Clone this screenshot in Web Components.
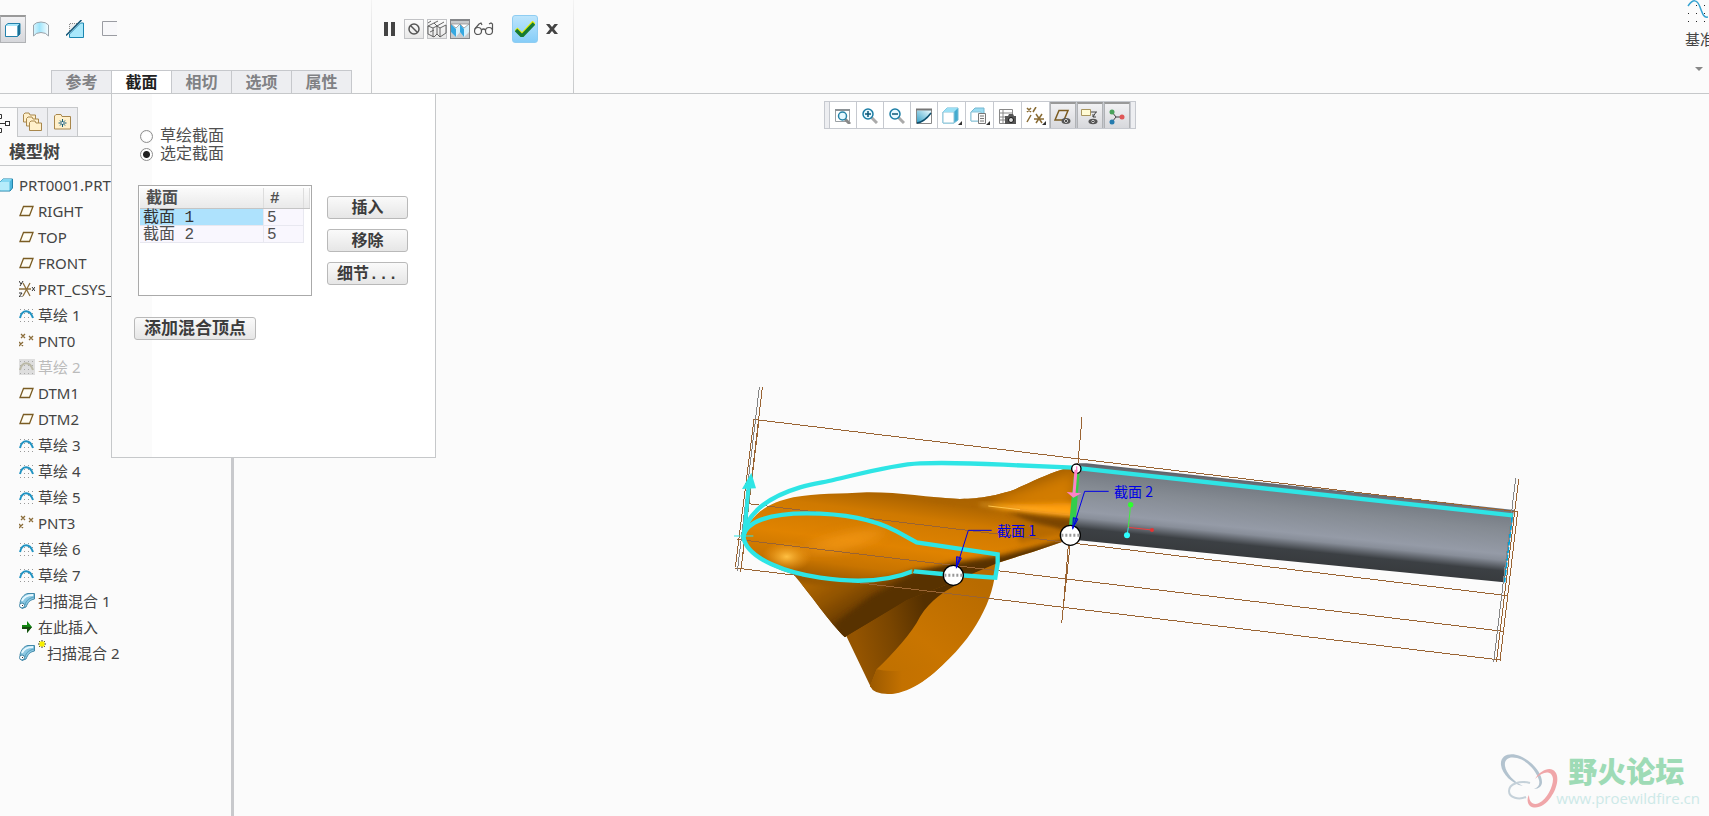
<!DOCTYPE html>
<html lang="zh-CN">
<head>
<meta charset="utf-8">
<title>PRT0001</title>
<style>
  body {
    margin: 0;
    background: #fbfbfb;
    color: #444;
    font-family: "Noto Sans", "Noto Sans CJK SC", sans-serif;
    font-size: 15px;
  }
</style>
</head>
<body>
<cad-app></cad-app>

<template id="model-template">
  <style>
    :host { display: block; min-width: 0; min-height: 0; overflow: hidden; }
    svg { display: block; width: 100%; height: 100%; }
    text { font: 14px "Noto Sans CJK SC", sans-serif; fill: #0000e6; }
  </style>
  <svg viewBox="234 94 1475 722" role="img" aria-label="PRT0001">
    <defs>
      <linearGradient id="shaft" gradientUnits="userSpaceOnUse" x1="1600" y1="334" x2="1577" y2="562">
        <stop offset="0" stop-color="#5e646c"/>
        <stop offset=".08" stop-color="#757b83"/>
        <stop offset=".3" stop-color="#858b93"/>
        <stop offset=".62" stop-color="#959ba7"/>
        <stop offset=".7" stop-color="#888e99"/>
        <stop offset=".84" stop-color="#3c4044"/>
        <stop offset="1" stop-color="#383b3e"/>
      </linearGradient>
      <linearGradient id="body" gradientUnits="userSpaceOnUse" x1="420" y1="365" x2="380" y2="660">
        <stop offset="0" stop-color="#ae6500"/>
        <stop offset=".18" stop-color="#cf7900"/>
        <stop offset=".5" stop-color="#e08300"/>
        <stop offset=".75" stop-color="#c87400"/>
        <stop offset="1" stop-color="#8a4f00"/>
      </linearGradient>
      <linearGradient id="cone" gradientUnits="userSpaceOnUse" x1="300" y1="600" x2="400" y2="770">
        <stop offset="0" stop-color="#b46900"/>
        <stop offset=".5" stop-color="#8d5100"/>
        <stop offset="1" stop-color="#573000"/>
      </linearGradient>
      <linearGradient id="fold" gradientUnits="userSpaceOnUse" x1="400" y1="780" x2="620" y2="730">
        <stop offset="0" stop-color="#945400"/>
        <stop offset=".5" stop-color="#794500"/>
        <stop offset="1" stop-color="#553000"/>
      </linearGradient>
      <linearGradient id="blade" gradientUnits="userSpaceOnUse" x1="540" y1="960" x2="790" y2="650">
        <stop offset="0" stop-color="#bf7000"/>
        <stop offset=".4" stop-color="#c97500"/>
        <stop offset="1" stop-color="#b86b00"/>
      </linearGradient>
      <linearGradient id="tip" x1="0" y1="0" x2="1" y2="0">
        <stop offset="0" stop-color="#9b5900"/>
        <stop offset=".4" stop-color="#c37100"/>
        <stop offset="1" stop-color="#c97500"/>
      </linearGradient>
      <radialGradient id="shine">
        <stop offset="0" stop-color="#ffc043"/>
        <stop offset="1" stop-color="#f49a18" stop-opacity="0"/>
      </radialGradient>
      <clipPath id="hull">
        <path d="M75 500 C80 445 130 402 220 382 C290 370 360 372 440 367 C540 366 620 383 720 387 C790 386 820 377 870 364 C930 340 970 316 1030 298 L1076 296 L1050 508 L940 545 L835 578 L690 640 L560 690 L384 795 L375 802 C330 760 270 670 220 613 C150 590 80 560 75 500Z"/>
      </clipPath>
      <filter id="soft8" x="-30%" y="-30%" width="160%" height="160%"><feGaussianBlur stdDeviation="8"/></filter>
      <filter id="soft20" x="-40%" y="-40%" width="180%" height="180%"><feGaussianBlur stdDeviation="18"/></filter>
    </defs>

    <g transform="translate(720 370) scale(.33333)" fill="none">
      <!-- shaft -->
      <path fill="url(#shaft)" d="M1076 280 L1100 280 L2382 420 L2352 637 L1046 508Z"/>
      <path stroke="#00a0d8" stroke-width="6" stroke-dasharray="18 5" d="M2376 440 L2353 637"/>

      <!-- blade -->
      <path fill="url(#fold)" d="M380 800 L384 785 L540 680 L640 610 L760 600 L700 700 L560 860 L500 930 L452 950Z"/>
      <path fill="url(#blade)" d="M470 898 C520 850 575 790 600 740 C630 690 680 660 700 650 L740 610 L829 578 C825 640 810 690 780 745 C750 800 710 850 640 910 C590 950 550 968 505 972 L450 950Z"/>
      <path fill="url(#tip)" d="M470 898 Q500 906 540 902 Q640 890 690 860 C630 930 560 972 505 972 Q460 972 450 948Z"/>

      <!-- hull -->
      <g clip-path="url(#hull)">
        <path fill="url(#body)" d="M40 260H1100V830H40Z"/>
        <path fill="url(#cone)" filter="url(#soft8)" d="M170 625 C300 650 460 650 580 600 L700 590 L700 700 L380 830 L330 800Z"/>
        <path fill="#593200" filter="url(#soft8)" d="M340 765 L450 680 L580 612 L700 578 L850 555 L1070 500 L1000 560 L700 700 L380 815Z"/>
        <path fill="#a96200" filter="url(#soft8)" d="M620 388 C730 400 780 396 880 374 L1060 300 L1060 275 L860 345 L700 370Z"/>
        <path fill="#d27b00" filter="url(#soft20)" d="M840 385 L1060 310 L1055 430 L820 410Z"/>
        <path fill="#ff9e10" filter="url(#soft8)" d="M800 405 Q930 402 1062 400 V440 L900 426Z"/>
        <path fill="#7a4500" filter="url(#soft8)" d="M860 425 Q960 440 1065 448 V485 L950 470Z"/>
        <path fill="#b86a00" filter="url(#soft8)" d="M870 440 L1000 475 L1030 490 L900 520Z"/>
        <path stroke="#ffc34a" stroke-width="4" filter="url(#soft8)" d="M780 403 L1060 434"/>
        <path stroke="#ffc34a" stroke-width="3" d="M805 408 L900 419"/>
        <path stroke="#f09a20" stroke-width="3" d="M900 419 L1056 435"/>
        <path fill="#f79c1c" filter="url(#soft20)" opacity=".7" d="M230 545 Q360 480 500 478 Q480 510 350 545Z"/>
        <ellipse cx="200" cy="560" rx="75" ry="46" fill="url(#shine)"/>
      </g>

      <!-- datum planes -->
      <g stroke="#9a6433" stroke-width="3" shape-rendering="crispEdges">
        <path d="M100 148 L117 150 L1070 266 L2393 425"/>
        <path d="M75 400 L1080 522 L2362 677"/>
        <path d="M50 508 L1040 627 L2350 784"/>
        <path d="M46 594 L1030 712 L2340 870"/>
        <path d="M127 52 L62 606 M102 148 L46 592 M117 150 L68 560"/>
        <path d="M1086 142 L1073 290 M1052 510 L1025 758 M1045 525 L1030 712"/>
        <path d="M2396 328 L2329 877 M2393 425 L2340 872"/>
        <path stroke="#858585" d="M118 52 L52 604 M2387 325 L2321 877"/>
      </g>

      <!-- trajectory and sections -->
      <g stroke="#2ee5e5" stroke-width="13">
        <path d="M70 500 C76 440 130 385 240 352 C280 341 310 337 340 330 C410 314 520 283 600 280 Q700 277 850 284 L1060 293 L2378 436"/>
        <path d="M70 500 C76 455 150 430 260 430 C380 430 470 452 530 484 L590 517 L833 553 L833 580 L826 623 L668 612 L582 604"/>
        <path d="M70 500 C80 570 210 610 300 623 C400 638 500 636 580 603"/>
        <path d="M86 350 L72 500" stroke-width="12"/>
        <path d="M42 498 H100" stroke-width="3"/>
      </g>
      <path fill="#2ee5e5" d="M94 308 L108 355 L66 357Z"/>
      <path stroke="#b86b00" stroke-width="3" d="M577 597 V612"/>

      <!-- start profile -->
      <path fill="#32cd4b" d="M1062 310 L1079 305 L1066 468 L1047 468Z"/>
      <circle cx="1069" cy="296" r="14" fill="#fff" stroke="#000" stroke-width="4"/>
      <path stroke="#ff82c8" stroke-width="9" d="M1068 300 L1062 372"/>
      <path stroke="#ff82c8" stroke-width="4" d="M1070 289 V304"/>
      <path fill="#ff82c8" d="M1040 366 L1084 370 L1060 383Z"/>

      <!-- drag handles -->
      <g stroke="#000" stroke-width="4" fill="#fff">
        <circle cx="1051" cy="496" r="30"/>
        <circle cx="700" cy="616" r="30"/>
      </g>
      <path stroke="#999" stroke-width="9" stroke-dasharray="6 6" d="M1024 496 H1078 M673 616 H727"/>

      <!-- leaders -->
      <g stroke="#0000e6" stroke-width="3">
        <path d="M709 595 L745 481 H815"/>
        <path d="M1058 478 L1094 364 H1166"/>
        <path fill="#0000e6" fill-opacity=".5" d="M709 592 L710 560 L724 564Z M1058 475 L1060 443 L1074 447Z"/>
      </g>

      <!-- coordinate system -->
      <g stroke-width="3">
        <path stroke="#3cf03c" d="M1232 404 L1225 472"/>
        <path stroke="#f03c3c" d="M1225 472 L1296 480"/>
        <path stroke="#2ee5e5" d="M1225 472 L1221 496"/>
      </g>
      <circle cx="1232" cy="404" r="8" fill="#2dff2d"/>
      <circle cx="1296" cy="480" r="6" fill="#e63232"/>
      <circle cx="1221" cy="496" r="9" fill="#2effff"/>
    </g>
    <text x="997" y="536">截面 1</text>
    <text x="1114" y="497">截面 2</text>
  </svg>
</template>

<script>
const icons = {
  solid: [16, 16, `<path d="M.5 3.500 3 1.500H15V12L12.500 14.500H.5Z" fill="#a9e8fb" stroke="#2481ab"/><path d="M12.500 4 15 1.500V12L12.500 14.500Z" fill="#1b6f95"/><path d="M1 4H12V14H1Z" fill="#fff"/>`],
  surface: [16, 16, `<defs><linearGradient id="g"><stop stop-color="#d9f4fd"/><stop offset=".4" stop-color="#9fe5fb"/><stop offset="1" stop-color="#f8fdff"/></linearGradient></defs><path d="M.5 4Q3 1 8 1T15.500 4V15Q13 11.500 8 11.500T.5 15Z" fill="url(#g)" stroke="#9aa3aa"/>`],
  cut: [18, 18, `<path d="M3.500 11V3.500H11" fill="#eee" stroke="#888" stroke-dasharray="1 1"/><path d="M17.500 3V17.500H3.500V14L14.500 3Z" fill="#a9e8fb" stroke="#1b86b0"/><path d="M0 15.500 15.500 0" stroke="#0d4f70" stroke-width="1.500"/>`],
  thin: [16, 16, `<path d="M15 .5H.5V14.500H15" fill="#f8f8fa" stroke="#9a9ca2"/>`],
  pause: [12, 14, `<path d="M0 0H4V14H0ZM7 0H11V14H7Z" fill="#444"/>`],
  none: [12, 12, `<circle cx="6" cy="6" r="5" fill="none" stroke="#555" stroke-width="1.500"/><path d="M2.500 2.500 9.500 9.500" stroke="#555" stroke-width="1.500"/>`],
  wire: [20, 18, `<path d="M1 6 7 3 10 6V14L7 17 1 14ZM1 6 6 8V17M6 8 10 6M10 6 17 2M7 3 11 1M19 5V13L13 17 10 14M13 8V17M13 8 19 5M10 6 13 8M1 3 4 1M3 12 7 10" fill="none" stroke="#555" stroke-width=".9"/>`],
  preview: [20, 18, `<path d="M1 3H19V11L14 16 10 11 6 16 1 11Z" fill="#d6f1fc"/><path d="M1 3 6 8V16L1 11ZM10 3 14 8V16L10 11Z" fill="#36a8e0"/><path d="M1 3H10L6 7ZM10 3H19L14 7Z" fill="#fff" stroke="#888" stroke-width=".7"/>`],
  glasses: [20, 14, `<g fill="none" stroke="#555" stroke-width="1.200"><circle cx="4" cy="9" r="3.500"/><circle cx="15" cy="9" r="3.500"/><path d="M7.500 8Q9.500 6 11.500 8M.8 7 5 2 7 1 8 3M18.500 8 18.500 2 17 1 15 2"/></g>`],
  ok: [20, 16, `<path d="M1 8 7 14 19 1" fill="none" stroke="#e8f000" stroke-width="4"/><path d="M1 9 7 15 19 2.500" fill="none" stroke="#167a34" stroke-width="3.500"/>`],
  cancel: [12, 10, `<path d="M0 0H3.500L6 3 8.500 0H12L8 5 12 10H8.500L6 7 3.500 10H0L4 5Z" fill="#444"/>`],
  datum: [21, 24, `<path d="M1 6C6-1 10-1 13 7S17 18 21 17" fill="none" stroke="#35a3d2" stroke-width="1.500"/><path d="M1 13.500h1m7 0h1m7 0h1M1 21.500h1m7 0h1m7 0h1M9 5.500h1m7 0h1" stroke="#222"/>`],
  tree: [10, 20, `<g fill="#fff" stroke="#333"><path d="M0 10.500H5"/><rect x="5.500" y="8.500" width="4" height="4"/><path d="M0 1.500H1.500V5.500H0M0 15.500H1.500V19.500H0"/></g>`],
  folders: [20, 20, `<g fill="#fff0cb" stroke="#a8874c"><path d="M.5 10V2.500L2 1H6L7 3H12.500V10Z"/><path d="M3.500 14V6.500L5 5H9L10 7H15.500V14Z"/><path d="M6.500 18.500V10.500L8 9H12L13 11H18.500V18.500Z"/></g>`],
  favorites: [18, 16, `<path d="M.5 15V2L2 .5H7L8 2.500H16.500V15Z" fill="#fff0cb" stroke="#a8874c"/><path d="M8.500 5V13M4.500 9H12.500M6 6.500 11 11.500M11 6.500 6 11.500" stroke="#125b78"/><circle cx="8.500" cy="9" r="1" fill="#fff"/>`],
  part: [16, 16, `<path d="M0 5 3 2H12.500V11L10 14H0Z" fill="#4db7de" stroke="#2384ab"/><path d="M0 5H9.500V13.500H0Z" fill="#b5ecfb"/><path d="M0 5 3 2H12L9.500 5Z" fill="#85d8f2"/>`],
  plane: [16, 16, `<path d="M4.500 3.500H14L10.500 12.500H1Z" fill="#fffdf4" stroke="#7a5c23" stroke-width="1.300"/>`],
  csys: [16, 16, `<path d="M0 8H12M4 2 11 15M11 2 4 15" stroke="#8c6f3c" stroke-width="1.300"/><path d="M0 0 2 3M4 0 1 5M0 12H3L0 16H4M13 6 16 10M16 6 13 10" fill="none" stroke="#333"/>`],
  sketch: [16, 16, `<path d="M1 2.500H15M1 6.500H15M1 10.500H15M1 14.500H15" stroke="#999" stroke-dasharray="1 3"/><path d="M1 11C3 2 11 2 14 11" fill="none" stroke="#2093c2" stroke-width="2"/>`],
  suppressed: [16, 16, `<path d="M0 0H16V16H0Z" fill="#dedede"/><path d="M1 2.500H15M1 6.500H15M1 10.500H15M1 14.500H15" stroke="#aaa" stroke-dasharray="1 3"/><path d="M1 11C3 2 11 2 14 11" fill="none" stroke="#bbb9a6" stroke-width="2"/>`],
  point: [16, 16, `<path d="M2 1 6 5M6 1 2 5M10 3 14 7M14 3 10 7M0 9 4 13M4 9 0 13" stroke="#8a6c39" stroke-width="1.300"/>`],
  blend: [16, 16, `<path d="M1 10C2 5 5 1 9 .5H15.500V6C11 7 9 9 7 14L3 15.500Z" fill="#8cc8e2" stroke="#4188a8"/><path d="M3 8C5 3 9 2 14 2" fill="none" stroke="#e6f8ff" stroke-width="2"/><path d="M6 12C7 7 11 5 15 4" fill="none" stroke="#4f9dbd"/><circle cx="3" cy="12.500" r="2.500" fill="#fff" stroke="#3c83a4"/><path d="M3 12H4V13H3Z" fill="#333"/>`],
  insert: [16, 16, `<path d="M3 6H8V2L13 8 8 14V10H3Z" fill="#138713"/><path d="M3 10H8V14L13 8H3Z" fill="#174e10"/>`],
  fresh: [8, 16, `<path d="M4 0V8M0 4H8M1 1 7 7M7 1 1 7" stroke="#333"/><path d="M1.500 1.500H6.500V6.500H1.500Z" fill="#f8f000"/>`],
  refit: [16, 16, `<path d="M.5 13.500V1.500H14.500V13.500Z" fill="#fff" stroke="#9aa0a4"/><path d="M0 2H15" stroke="#8c9296" stroke-width="2"/><path d="M10 11 15 16" stroke="#888" stroke-width="3"/><circle cx="7.500" cy="8" r="4" fill="#e5f8ff" stroke="#2583a8" stroke-width="1.500"/>`],
  zoomin: [16, 16, `<path d="M9 9 15 15" stroke="#aaa" stroke-width="3"/><circle cx="6" cy="6" r="5" fill="#e9f9ff" stroke="#1b7da5" stroke-width="1.500"/><path d="M3 6H9M6 3V9" stroke="#0c5777" stroke-width="1.500"/>`],
  zoomout: [16, 16, `<path d="M9 9 15 15" stroke="#aaa" stroke-width="3"/><circle cx="6" cy="6" r="5" fill="#e9f9ff" stroke="#1b7da5" stroke-width="1.500"/><path d="M3 6H9" stroke="#0c5777" stroke-width="1.500"/>`],
  repaint: [16, 16, `<defs><linearGradient id="g" x1="1" y1="0" x2="0" y2="1"><stop stop-color="#eafaff"/><stop offset="1" stop-color="#35a0c6"/></linearGradient></defs><path d="M.5 1.500H15.500V15.500H.5Z" fill="#d4f3fd" stroke="#888"/><path d="M1 15C8 14 12 9 15 5V15Z" fill="#fff"/><path d="M1 15V3H15V5C12 9 8 14 1 15Z" fill="url(#g)"/><path d="M0 1.500H16" stroke="#777" stroke-width="2"/><path d="M1 15C8 14 12 9 15 5" fill="none" stroke="#0f4f6d" stroke-width="1.500"/>`],
  shade: [20, 18, `<path d="M1 5 5 1H16V13L12 16H1Z" fill="#42abcf" stroke="#6fb9d4"/><path d="M1 5H12V16H1Z" fill="#fff" stroke="#8cc4d8"/><path d="M1 5 5 1H16L12 5Z" fill="#9be0f5"/><path d="M20 14V18H16Z" fill="#333"/>`],
  views: [20, 18, `<path d="M1 5 5 1H14V12L11 14H1Z" fill="#9adcf2" stroke="#76b7d0"/><path d="M1 5H11V14H1Z" fill="#fff" stroke="#8cc4d8"/><path d="M8.500 6.500H15.500V16.500H8.500Z" fill="#f8f8f8" stroke="#777"/><path d="M10 9H14M10 11.500H14M10 14H14" stroke="#777"/><path d="M20 14V18H16Z" fill="#333"/>`],
  camera: [18, 17, `<path d="M.5 1.500H13.500V15.500H.5ZM4 1V16M0 5H14M0 9H14M0 12H7" fill="#fff" stroke="#888"/><path d="M6 8H9L10 6H14L15 8H17V16H6Z" fill="#555"/><circle cx="12" cy="12" r="2.500" fill="#ddd" stroke="#111"/>`],
  datums: [20, 18, `<path d="M1 1 5 5M5 1 1 5M1 15 5 8M7 5 10 0M8 12H18M10 7 16 16M16 7 10 16" stroke="#896b33" stroke-width="1.500"/><path d="M20 14V18H16Z" fill="#333"/>`],
  planeeye: [18, 16, `<path d="M5 1.500H14L10 11H1Z" fill="none" stroke="#7c5c20" stroke-width="1.500"/><ellipse cx="12" cy="12" rx="4.500" ry="3" fill="#555"/><circle cx="12" cy="12" r="1.500" fill="#111" stroke="#ddd"/>`],
  noteeye: [18, 16, `<path d="M.5.500H9.500V6.500H.5Z" fill="#fffbd5" stroke="#a8955e"/><path d="M10 3H16M15 3 12 8M12 5V8H15" fill="none" stroke="#444"/><ellipse cx="12" cy="12.500" rx="4.500" ry="2.700" fill="#555"/><circle cx="12" cy="12.500" r="1.200" fill="#111" stroke="#ddd"/>`],
  spin: [16, 16, `<path d="M3 3 7 8 13 8M7 8 3 13" fill="none" stroke="#444"/><circle cx="3" cy="3" r="2.500" fill="#49a25b"/><circle cx="13" cy="8" r="2.500" fill="#df5656"/><circle cx="3" cy="13" r="2.500" fill="#267caf"/>`],
  swirl: [60, 58, `<path fill="#b3c3cf" fill-rule="evenodd" d="M1 12C0 2 10-1 20 3 32 8 42 20 42 29 42 33 39 36 34 36 39 34 40 31 39 27 36 17 26 7 17 5 9 3 4 6 5 13 6 20 14 29 23 33 12 31 2 21 1 12Z"/><path fill="none" stroke="#c5d1d9" stroke-width="2" d="M30 30C20 27 9 31 9 38S19 47 26 44"/><path fill="#f0a6a9" d="M35 26C40 18 48 14 53 17 60 21 58 34 51 44 45 53 36 57 30 53 27 50 27 45 29 42 29 49 33 53 39 50 47 46 53 34 53 26 52 17 43 18 35 26Z"/>`]
};

class CadIcon extends HTMLElement {
  constructor() {
    super();
    this.attachShadow({ mode: "open" });
  }
  connectedCallback() {
    const [w, h, body] = icons[this.getAttribute("name")];
    this.shadowRoot.innerHTML = `<style>
      :host { display: inline-flex; flex: none; }
      svg { display: block; }
    </style>
    <svg width="${w}" height="${h}" viewBox="0 0 ${w} ${h}" aria-hidden="true">${body}</svg>`;
  }
}
customElements.define("cad-icon", CadIcon);

// flat icon button; kind is "", "pressed", "boxed", "down" or "accept"
class CadTool extends HTMLElement {
  constructor() {
    super();
    this.attachShadow({ mode: "open" });
  }
  connectedCallback() {
    this.shadowRoot.innerHTML = `<style>
      :host { display: block; flex: none; }
      button {
        box-sizing: border-box;
        display: flex;
        align-items: center;
        justify-content: center;
        width: 100%;
        height: 28px;
        padding: 0;
        border: 0;
        background: none;
      }
      .pressed {
        border: 1px solid #b0b2b5;
        border-top: 2px solid #999;
        background: linear-gradient(#f1f1f3, #d6d7db);
      }
      .boxed { height: 20px; border: 1px solid #c2c3c6; background: linear-gradient(#fbfbfb, #e8e8e8); }
      .down { height: 20px; border: 1px solid #85878a; border-top-width: 2px; background: #c8cacc; }
      .accept { border: 1px solid #8fcdf2; border-radius: 3px; background: linear-gradient(#bde5fc, #86cdf8); }
    </style>
    <button type="button" class="${this.getAttribute("kind") || ""}" aria-label="${this.getAttribute("icon")}">
      <cad-icon name="${this.getAttribute("icon")}"></cad-icon>
    </button>`;
  }
}
customElements.define("cad-tool", CadTool);

class CadTab extends HTMLElement {
  constructor() {
    super();
    this.attachShadow({ mode: "open" });
    this.shadowRoot.innerHTML = `<style>
      :host { display: block; width: 61px; margin-right: -1px; }
      button {
        width: 100%;
        height: 23px;
        padding: 0 0 2px;
        border: 1px solid #c6c8cc;
        border-bottom: 0;
        background: #edeef1;
        color: #808184;
        font: bold 16px/20px "Noto Sans CJK SC", sans-serif;
      }
      :host([selected]) button { background: #fff; color: #222; }
    </style>
    <button type="button"><slot></slot></button>`;
  }
}
customElements.define("cad-tab", CadTab);

class CadButton extends HTMLElement {
  constructor() {
    super();
    this.attachShadow({ mode: "open" });
    this.shadowRoot.innerHTML = `<style>
      :host { display: block; }
      button {
        width: 100%;
        height: 23px;
        padding: 2px 9px 0;
        border: 1px solid #b9b9b9;
        border-radius: 3px;
        background: linear-gradient(#fafafa, #e6e6e6);
        color: #3c3c3c;
        font: bold 17px/18px "Liberation Mono", "Noto Sans CJK SC", monospace;
        white-space: nowrap;
      }
      :host([narrow]) button { padding: 2px 0 0; font-size: 16px; }
    </style>
    <button type="button"><slot></slot></button>`;
  }
}
customElements.define("cad-button", CadButton);

class SectionPanel extends HTMLElement {
  constructor() {
    super();
    this.attachShadow({ mode: "open" });
    this.shadowRoot.innerHTML = `<style>
      :host {
        display: flex;
        flex-direction: column;
        align-items: flex-start;
        gap: 21px;
        box-sizing: border-box;
        width: 325px;
        min-height: 364px;
        padding: 33px 26px 0 22px;
        border: 1px solid #c6c8ca;
        border-top: 0;
        background: linear-gradient(to right, #fbfbfb 40px, #fff 40px);
        color: #505050;
        font: 16px/18px "Liberation Mono", "Noto Sans CJK SC", monospace;
      }
      .choice { display: grid; padding: 0 0 1px 6px; }
      label { display: flex; align-items: center; gap: 7px; height: 18px; }
      label span { padding-top: 2px; }
      input {
        appearance: none;
        width: 13px;
        height: 13px;
        margin: 0;
        border: 1px solid #8e8e8e;
        border-radius: 50%;
        background: radial-gradient(#fff 50%, #e4e4e4);
      }
      input:checked { background: radial-gradient(circle, #222 0 3px, #fff 4px); }
      .list { display: flex; gap: 15px; padding-left: 4px; }
      .frame {
        box-sizing: border-box;
        width: 174px;
        height: 111px;
        padding: 2px 1px;
        border: 1px solid #aaa;
        background: #fff;
      }
      table { width: 100%; border-collapse: collapse; table-layout: fixed; }
      th {
        height: 18px;
        padding: 2px 6px 0;
        border-right: 1px solid #ddd;
        border-bottom: 1px solid #c4c4c4;
        background: linear-gradient(#fbfbfb, #e9e9e9);
        font-size: 16px;
        line-height: 18px;
        text-align: left;
      }
      td {
        height: 14px;
        padding: 2px 3px 0;
        border-right: 1px solid #e8e8f0;
        border-bottom: 1px solid #e8e8f0;
        background: #f9f7fe;
        line-height: 14px;
      }
      td.on { background: #aee2fd; color: #333; }
      td:last-child { border: 0; background: #fff; }
      .actions { display: grid; align-content: start; gap: 10px; width: 81px; padding-top: 11px; }
    </style>
    <div class="choice">
      <label><input type="radio" name="kind"><span>草绘截面</span></label>
      <label><input type="radio" name="kind" checked><span>选定截面</span></label>
    </div>
    <div class="list">
      <div class="frame">
        <table>
          <colgroup><col><col style="width: 40px"><col style="width: 6px"></colgroup>
          <tr><th>截面</th><th>#</th><th></th></tr>
          <tr><td class="on">截面 1</td><td>5</td><td></td></tr>
          <tr><td>截面 2</td><td>5</td><td></td></tr>
        </table>
      </div>
      <div class="actions">
        <cad-button narrow>插入</cad-button>
        <cad-button narrow>移除</cad-button>
        <cad-button narrow>细节...</cad-button>
      </div>
    </div>
    <cad-button>添加混合顶点</cad-button>`;
  }
}
customElements.define("section-panel", SectionPanel);

class CadRibbon extends HTMLElement {
  constructor() {
    super();
    this.attachShadow({ mode: "open" });
    this.shadowRoot.innerHTML = `<style>
      :host {
        display: flex;
        position: relative;
        z-index: 1;
        height: 93px;
        border-bottom: 1px solid #c6c8ca;
      }
      .main { display: flex; flex-direction: column; justify-content: space-between; width: 371px; }
      .row { display: flex; align-items: center; padding-top: 15px; }
      .row cad-tool { width: 26px; }
      .row .slim { width: 22px; }
      .shapes { gap: 7px; }
      .tabs { display: flex; padding-left: 51px; }
      .control {
        box-sizing: border-box;
        width: 203px;
        border: solid;
        border-width: 0 1px;
        border-image: linear-gradient(#f4f4f4, #c6c8ca) 1;
      }
      .control .row { gap: 3px; padding-left: 7px; }
      .row .small { width: 20px; }
      .control .accept { margin-left: 14px; }
      .datum {
        display: flex;
        flex-direction: column;
        align-items: flex-start;
        width: 24px;
        margin-left: auto;
        overflow: hidden;
        white-space: nowrap;
      }
      .datum cad-icon { padding-left: 2px; }
      .datum span { padding-top: 4px; font: 15px/22px "Noto Sans CJK SC", sans-serif; }
      .arrow { margin: 17px 0 0 10px; border: 4px solid transparent; border-top-color: #888; }
      section-panel { position: absolute; top: 100%; left: 111px; margin-top: 1px; }
    </style>
    <div class="main">
      <div class="row shapes">
        <cad-tool icon="solid" kind="pressed"></cad-tool>
        <cad-tool icon="surface" style="width: 16px"></cad-tool>
        <cad-tool icon="cut" style="width: 38px"></cad-tool>
        <cad-tool icon="thin" style="width: 18px"></cad-tool>
      </div>
      <div class="tabs">
        <cad-tab>参考</cad-tab>
        <cad-tab selected>截面</cad-tab>
        <cad-tab>相切</cad-tab>
        <cad-tab>选项</cad-tab>
        <cad-tab>属性</cad-tab>
      </div>
    </div>
    <div class="control">
      <div class="row">
        <cad-tool icon="pause" class="slim"></cad-tool>
        <cad-tool icon="none" kind="boxed" class="small"></cad-tool>
        <cad-tool icon="wire" kind="boxed" class="small"></cad-tool>
        <cad-tool icon="preview" kind="down" class="small"></cad-tool>
        <cad-tool icon="glasses" class="slim"></cad-tool>
        <cad-tool icon="ok" kind="accept" class="accept"></cad-tool>
        <cad-tool icon="cancel" class="slim"></cad-tool>
      </div>
    </div>
    <div class="datum">
      <cad-icon name="datum"></cad-icon>
      <span>基准</span>
      <i class="arrow"></i>
    </div>
    <section-panel></section-panel>`;
  }
}
customElements.define("cad-ribbon", CadRibbon);

class TreeItem extends HTMLElement {
  constructor() {
    super();
    this.attachShadow({ mode: "open" });
  }
  connectedCallback() {
    this.shadowRoot.innerHTML = `<style>
      :host {
        display: flex;
        align-items: center;
        gap: 3px;
        height: 26px;
        padding-left: 19px;
        line-height: 26px;
        white-space: nowrap;
      }
      :host([root]) { padding-left: 0; }
      :host([off]) { color: #bbb; }
      .name { display: flex; gap: 1px; }
    </style>
    <cad-icon name="${this.getAttribute("icon")}"></cad-icon>
    <span class="name">${this.hasAttribute("fresh") ? '<cad-icon name="fresh"></cad-icon>' : ""}<slot></slot></span>`;
  }
}
customElements.define("tree-item", TreeItem);

class ModelTree extends HTMLElement {
  constructor() {
    super();
    this.attachShadow({ mode: "open" });
    this.shadowRoot.innerHTML = `<style>
      :host { display: block; border-right: 3px solid #c8c9cc; padding-top: 13px; overflow: hidden; }
      .tabs { display: flex; height: 29px; border-bottom: 1px solid #c6c8ca; }
      button {
        box-sizing: border-box;
        display: flex;
        align-items: center;
        justify-content: center;
        width: 31px;
        height: 29px;
        margin-right: -1px;
        padding: 0;
        border: 1px solid #c6c8ca;
        border-bottom: 0;
        background: #edeef1;
      }
      button.on { width: 18px; height: 30px; padding-right: 7px; border-left: 0; background: #fbfbfb; }
      h2 {
        margin: 0;
        padding-left: 9px;
        border-bottom: 1px solid #c6c8ca;
        color: #444;
        font: bold 17px/28px "Noto Sans CJK SC", sans-serif;
      }
      .items { padding-top: 6px; }
    </style>
    <div class="tabs">
      <button type="button" class="on" aria-label="tree"><cad-icon name="tree"></cad-icon></button>
      <button type="button" aria-label="folders"><cad-icon name="folders"></cad-icon></button>
      <button type="button" aria-label="favorites"><cad-icon name="favorites"></cad-icon></button>
    </div>
    <h2>模型树</h2>
    <div class="items"><slot></slot></div>`;
  }
}
customElements.define("model-tree", ModelTree);

class ViewToolbar extends HTMLElement {
  constructor() {
    super();
    this.attachShadow({ mode: "open" });
    const tools = ["refit", "zoomin", "zoomout", "repaint", "shade", "views", "camera", "datums"];
    const toggles = ["planeeye", "noteeye", "spin"];
    this.shadowRoot.innerHTML = `<style>
      :host {
        display: flex;
        box-sizing: border-box;
        height: 28px;
        padding: 0 4px;
        border: 1px solid #c6c9cf;
        background: #edeef1;
      }
      cad-tool { width: 26px; height: 26px; overflow: hidden; border-left: 1px solid #c6c9cf; background: #fff; }
      cad-tool.wide { width: 27px; }
      cad-tool:last-child { border-right: 1px solid #c6c9cf; }
    </style>` +
      tools.map((t, i) => `<cad-tool icon="${t}" class="${i > 3 ? "wide" : ""}"></cad-tool>`).join("") +
      toggles.map(t => `<cad-tool icon="${t}" kind="pressed"></cad-tool>`).join("");
  }
}
customElements.define("view-toolbar", ViewToolbar);

class ModelView extends HTMLElement {
  constructor() {
    super();
    this.attachShadow({ mode: "open" });
    const tmpl = document.querySelector("#model-template");
    this.shadowRoot.appendChild(tmpl.content.cloneNode(true));
  }
}
customElements.define("model-view", ModelView);

class ForumMark extends HTMLElement {
  constructor() {
    super();
    this.attachShadow({ mode: "open" });
    this.shadowRoot.innerHTML = `<style>
      :host { display: flex; }
      div { margin-left: -4px; }
      strong {
        display: block;
        padding-left: 12px;
        color: #9edbb6;
        font: 900 29px/34px "Noto Sans CJK SC", sans-serif;
      }
      a { display: block; color: #cde9e8; font: 15px/22px "Open Sans", sans-serif; text-decoration: none; }
    </style>
    <cad-icon name="swirl"></cad-icon>
    <div><strong>野火论坛</strong><a href="#">www.proewildfire.cn</a></div>`;
  }
}
customElements.define("forum-mark", ForumMark);

class CadApp extends HTMLElement {
  constructor() {
    super();
    this.attachShadow({ mode: "open" });
    this.shadowRoot.innerHTML = `<style>
      :host { display: grid; grid-template-rows: auto 1fr; height: 100vh; overflow: hidden; }
      .work { display: grid; grid-template-columns: 234px 1fr; min-height: 0; }
      .canvas { display: grid; min-width: 0; min-height: 0; }
      .canvas > * { grid-area: 1 / 1; }
      view-toolbar { place-self: start center; margin: 7px 0 0 17px; }
      forum-mark { place-self: end; margin: 0 9px 5px 0; }
    </style>
    <cad-ribbon></cad-ribbon>
    <div class="work">
      <model-tree>
        <tree-item icon="part" root>PRT0001.PRT</tree-item>
        <tree-item icon="plane">RIGHT</tree-item>
        <tree-item icon="plane">TOP</tree-item>
        <tree-item icon="plane">FRONT</tree-item>
        <tree-item icon="csys">PRT_CSYS_</tree-item>
        <tree-item icon="sketch">草绘 1</tree-item>
        <tree-item icon="point">PNT0</tree-item>
        <tree-item icon="suppressed" off>草绘 2</tree-item>
        <tree-item icon="plane">DTM1</tree-item>
        <tree-item icon="plane">DTM2</tree-item>
        <tree-item icon="sketch">草绘 3</tree-item>
        <tree-item icon="sketch">草绘 4</tree-item>
        <tree-item icon="sketch">草绘 5</tree-item>
        <tree-item icon="point">PNT3</tree-item>
        <tree-item icon="sketch">草绘 6</tree-item>
        <tree-item icon="sketch">草绘 7</tree-item>
        <tree-item icon="blend">扫描混合 1</tree-item>
        <tree-item icon="insert">在此插入</tree-item>
        <tree-item icon="blend" fresh>扫描混合 2</tree-item>
      </model-tree>
      <div class="canvas">
        <model-view></model-view>
        <view-toolbar></view-toolbar>
        <forum-mark></forum-mark>
      </div>
    </div>`;
  }
}
customElements.define("cad-app", CadApp);
</script>
</body>
</html>
